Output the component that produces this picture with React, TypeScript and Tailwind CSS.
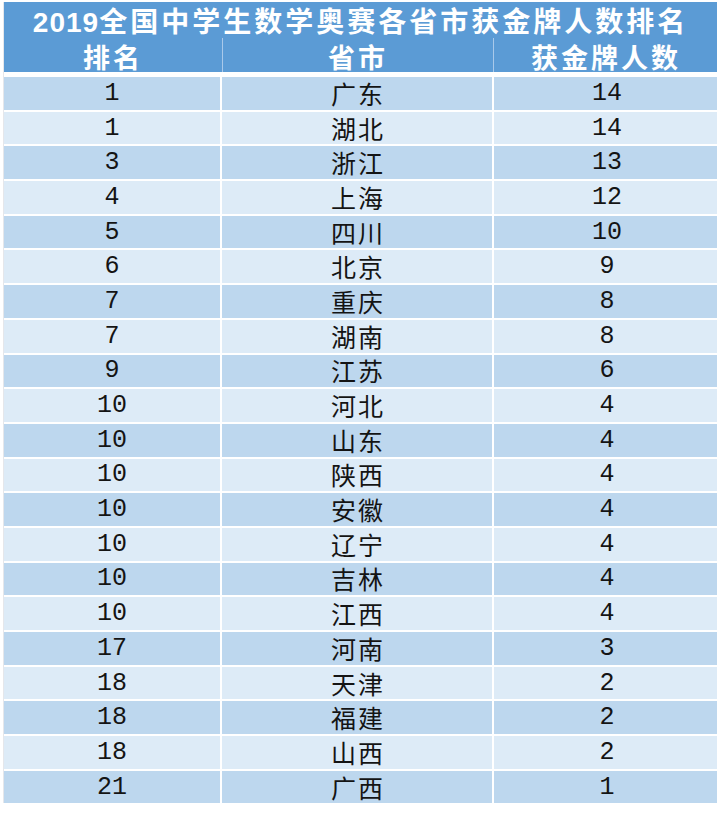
const rows: [string, string, string][] = [
  ['1', '广东', '14'],
  ['1', '湖北', '14'],
  ['3', '浙江', '13'],
  ['4', '上海', '12'],
  ['5', '四川', '10'],
  ['6', '北京', '9'],
  ['7', '重庆', '8'],
  ['7', '湖南', '8'],
  ['9', '江苏', '6'],
  ['10', '河北', '4'],
  ['10', '山东', '4'],
  ['10', '陕西', '4'],
  ['10', '安徽', '4'],
  ['10', '辽宁', '4'],
  ['10', '吉林', '4'],
  ['10', '江西', '4'],
  ['17', '河南', '3'],
  ['18', '天津', '2'],
  ['18', '福建', '2'],
  ['18', '山西', '2'],
  ['21', '广西', '1'],
];

const cjk = "font-['Noto_Sans_CJK_SC',sans-serif]";
const mono = "font-['Liberation_Mono','Noto_Sans_CJK_SC',monospace]";

const App = () => {
  return (
    <div className="min-h-screen w-[720px] bg-white pt-[2px] pl-[3px]">
      <div className="w-[714px] border-l border-gray-200">
        <div className="bg-[#5b9bd5] text-white">
          <div className="flex h-[36px] items-center justify-center pt-[3px]">
            <span className="font-['Liberation_Sans','Noto_Sans_CJK_SC',sans-serif] text-[28px] leading-none font-semibold tracking-[1px]">
              2019
              <span className={`${cjk} tracking-[3px]`}>全国中学生数学奥赛各省市获金牌人数排名</span>
            </span>
          </div>
          <div className="grid h-[34px] grid-cols-[219px_271px_224px]">
            <div className={`${cjk} flex items-center justify-center border-r border-[#a9c9ea] pt-[2px] text-[27px] leading-none font-semibold tracking-[3px]`}>
              排名
            </div>
            <div className={`${cjk} flex items-center justify-center border-r border-[#a9c9ea] pt-[2px] text-[27px] leading-none font-semibold tracking-[3px]`}>
              省市
            </div>
            <div className={`${cjk} flex items-center justify-center pt-[2px] text-[27px] leading-none font-semibold tracking-[3px]`}>
              获金牌人数
            </div>
          </div>
        </div>
        <div className="mt-[5px] flex flex-col gap-y-[2px]">
          {rows.map(([rank, prov, count], i) => (
            <div
              key={i}
              className={`grid h-[32.7px] grid-cols-[218px_270px_222px] gap-x-[2px] text-[#141414] ${
                i % 2 === 0 ? 'bg-[#bdd7ee]' : 'bg-[#ddebf7]'
              }`}
            >
              <div className={`${mono} flex items-center justify-center border-r-2 border-white text-[25px] leading-none`}>
                {rank}
              </div>
              <div className={`${cjk} flex items-center justify-center border-r-2 border-white text-[25px] leading-none tracking-[2px]`}>
                {prov}
              </div>
              <div className={`${mono} flex items-center justify-center text-[25px] leading-none`}>
                {count}
              </div>
            </div>
          ))}
        </div>
      </div>
    </div>
  );
};

export default App;
